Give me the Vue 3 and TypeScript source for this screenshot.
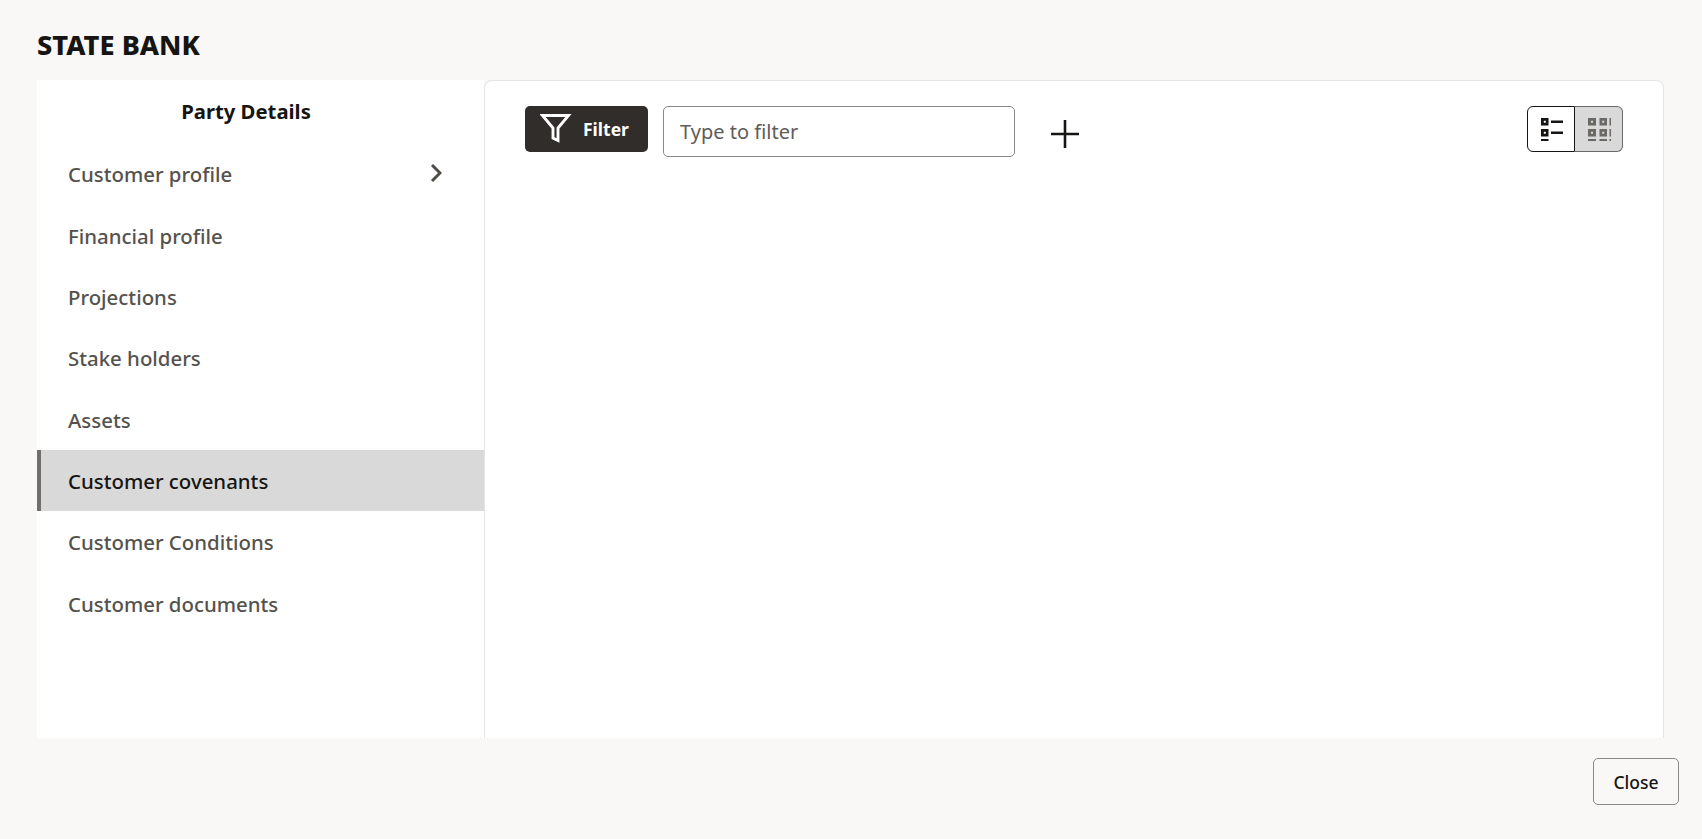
<script setup lang="ts">
const menuItems: string[] = [
  'Customer profile',
  'Financial profile',
  'Projections',
  'Stake holders',
  'Assets',
  'Customer covenants',
  'Customer Conditions',
  'Customer documents'
]
const activeItem = 'Customer covenants'
</script>

<template>
  <div class="page">
    <h1 class="page-title">STATE BANK</h1>

    <div class="page-body">
      <!-- left menu -->
      <aside class="side-menu">
        <div class="menu-title">Party Details</div>
        <div
          v-for="item in menuItems"
          :key="item"
          class="menu-item"
          :class="{ active: item === activeItem }"
        >
          <span>{{ item }}</span>
          <svg v-if="item === 'Customer profile'" class="chevron" viewBox="0 0 12 20" width="12" height="20">
            <path d="M2 2l8 8-8 8" fill="none" stroke="#4f4c48" stroke-width="3" />
          </svg>
        </div>
      </aside>

      <!-- right content -->
      <main class="content">
        <div class="toolbar">
          <button class="filter-btn" type="button">
            <svg viewBox="0 0 32 32" width="32" height="32">
              <path d="M2.5 2.5h26L18 15v12.5l-5-2.5V15z" fill="none" stroke="#fff" stroke-width="2.9" />
            </svg>
            <span>Filter</span>
          </button>
          <input class="filter-input" type="text" placeholder="Type to filter" />
          <button class="add-btn" type="button" aria-label="Add">
            <svg viewBox="0 0 28 28" width="28" height="28">
              <path d="M14 0v28M0 14h28" stroke="#161513" stroke-width="2.6" fill="none" />
            </svg>
          </button>

          <div class="view-toggle">
            <button class="toggle-btn selected" type="button" aria-label="List view">
              <svg viewBox="0 0 24 24" width="24" height="24">
                <path d="M2 1h7.5v7.5H2z M2 12h7.5v7.5H2z" fill="#161513" />
                <path d="M4.8 3.8h2v2h-2z M4.8 14.8h2v2h-2z" fill="#fff" />
                <path d="M12 3.5h12v2.4H12z M12 14.5h12v2.4H12z M2 22h7.5v2.4H2z" fill="#161513" />
              </svg>
            </button>
            <button class="toggle-btn" type="button" aria-label="Grid view">
              <svg viewBox="0 0 24 24" width="24" height="24">
                <path d="M1 1h8v7.5H1z M12.5 1h7.5v7.5h-7.5z M1 12h8v7.5H1z M12.5 12h7.5v7.5h-7.5z" fill="#6b6966" />
                <path d="M4 3.8h2v2H4z M15.2 3.8h2v2h-2z M4 14.8h2v2H4z M15.2 14.8h2v2h-2z" fill="#d9d9d9" />
                <path d="M22.5 1H24v7.5h-1.5z M22.5 12H24v7.5h-1.5z M1 22h8v2.4H1z M12.5 22h7.5v2.4h-7.5z M22.5 22H24v2.4h-1.5z" fill="#6b6966" />
              </svg>
            </button>
          </div>
        </div>
      </main>
    </div>

    <footer class="page-footer">
      <button class="close-btn" type="button">Close</button>
    </footer>
  </div>
</template>

<style>
html,
body {
  margin: 0;
  background: #f9f8f6;
}
</style>

<style scoped>
.page {
  display: flex;
  flex-direction: column;
  height: 839px;
  background: #f9f8f6;
  font-family: "Noto Sans", "Liberation Sans", sans-serif;
  color: #161513;
  overflow: hidden;
}

.page-title {
  margin: 0;
  height: 80px;
  padding: 29px 0 0 37px;
  box-sizing: border-box;
  font-size: 27.2px;
  line-height: 32px;
  font-weight: 800;
}

.page-body {
  display: flex;
  height: 658px;
  margin-left: 37px;
  margin-right: 38px;
}

.side-menu {
  width: 447px;
  flex: none;
  background: #fff;
}

.menu-title {
  height: 63px;
  width: 418px;
  padding-top: 15px;
  box-sizing: border-box;
  text-align: center;
  font-size: 20.3px;
  line-height: 32px;
  font-weight: 700;
}

.menu-item {
  display: flex;
  align-items: center;
  justify-content: space-between;
  height: 61.33px;
  padding: 1.5px 42px 0 31px;
  box-sizing: border-box;
  font-size: 20.4px;
  font-weight: 500;
  color: #55524e;
}

.menu-item.active {
  background: #d9d9d9;
  border-left: 4px solid #6f6f70;
  padding-left: 27px;
  color: #161513;
}

.chevron {
  margin-top: -3px;
}

.content {
  flex: 1;
  background: #fff;
  border: 1px solid #e5e4e2;
  border-bottom: none;
  border-radius: 8px 8px 0 0;
}

.toolbar {
  display: flex;
  align-items: flex-start;
  padding: 25px 40px 0 40px;
}

.filter-btn {
  display: flex;
  align-items: center;
  gap: 11px;
  width: 123px;
  height: 46px;
  padding: 0 0 0 15px;
  box-sizing: border-box;
  background: #312d2a;
  border: none;
  border-radius: 5px;
  color: #fff;
  font-family: "Noto Sans", "Liberation Sans", sans-serif;
  font-size: 17.5px;
  font-weight: 700;
}

.filter-input {
  width: 352px;
  height: 51px;
  margin-left: 15px;
  padding: 0 16px;
  box-sizing: border-box;
  background: #fff;
  border: 1px solid #8a8886;
  border-radius: 5px;
  font-family: "Noto Sans", "Liberation Sans", sans-serif;
  font-size: 20px;
  outline: none;
}

.filter-input::placeholder {
  color: #5f5c59;
  opacity: 1;
}

.add-btn {
  margin: 14px 0 0 36px;
  padding: 0;
  width: 28px;
  height: 28px;
  border: none;
  background: none;
}

.view-toggle {
  display: flex;
  margin-left: auto;
  height: 46px;
}

.toggle-btn {
  display: flex;
  align-items: center;
  justify-content: center;
  width: 48px;
  padding: 0;
  box-sizing: border-box;
  background: #d9d9d9;
  border: 1px solid #6b6966;
  border-left: none;
  border-radius: 0 6px 6px 0;
}

.toggle-btn.selected {
  width: 48px;
  background: #fff;
  border: 1px solid #161513;
  border-radius: 6px 0 0 6px;
}

.page-footer {
  display: flex;
  justify-content: flex-end;
  padding: 20px 23px 0 0;
}

.close-btn {
  width: 86px;
  height: 47px;
  padding: 0;
  background: transparent;
  border: 1px solid #8a8886;
  border-radius: 5px;
  font-family: "Noto Sans", "Liberation Sans", sans-serif;
  font-size: 17.5px;
  font-weight: 500;
  color: #161513;
}
</style>
